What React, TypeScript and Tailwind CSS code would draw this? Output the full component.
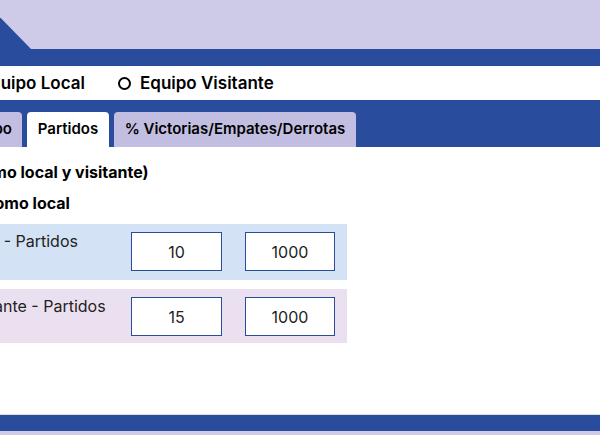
const rows = [
  { label: "Promedio como local - Partidos", a: "10", b: "1000", bg: "bg-[#d3e3f5]", h: "h-[56px]" },
  { label: "Promedio como visitante - Partidos", a: "15", b: "1000", bg: "bg-[#ebe0f0]", h: "h-[54px]" },
];

function Radio({ label }: { label: string }) {
  return (
    <label className="flex items-center gap-[9px] text-[17px] font-semibold text-black">
      <span className="w-[13px] h-[13px] rounded-full border-2 border-black bg-white" />
      {label}
    </label>
  );
}

export default function App() {
  return (
    <div className="w-[600px] h-[435px] overflow-hidden bg-white font-['Inter',sans-serif]">
      <div className="w-[800px] -ml-[200px]">
        {/* header */}
        <div className="h-[49px] bg-[#cdcbe7] flex">
          <div className="w-[231px] h-full bg-[#2a4c9c] [clip-path:polygon(0_0,183px_0,231px_49px,0_49px)]" />
        </div>
        <div className="h-[17px] bg-[#2a4c9c]" />

        {/* radios */}
        <div className="h-[34px] pt-[1px] flex items-center">
          <div className="w-[285px] flex justify-end">
            <Radio label="Equipo Local" />
          </div>
          <div className="ml-[33px]">
            <Radio label="Equipo Visitante" />
          </div>
        </div>

        {/* tabs */}
        <div className="h-[47px] bg-[#2a4c9c] flex items-end">
          <div className="w-[222px] flex justify-end">
            <div className="h-[35px] px-[10px] flex items-center rounded-t-[4px] bg-[#c1bee1] text-[15px] font-semibold text-black">
              Equipo
            </div>
          </div>
          <div className="ml-[5px] w-[82px] h-[35px] flex items-center justify-center rounded-t-[4px] bg-white text-[15px] font-semibold text-black">
            Partidos
          </div>
          <div className="ml-[5px] w-[242px] h-[35px] flex items-center justify-center rounded-t-[4px] bg-[#c1bee1] text-[15px] font-semibold text-black">
            % Victorias/Empates/Derrotas
          </div>
        </div>

        {/* content */}
        <div className="h-[268px] border-b border-[#dddddd] pt-[13px]">
          <div className="pl-[98px] text-[16px] leading-[24px] font-bold text-black whitespace-nowrap">
            Partidos (como local y visitante)
          </div>
          <div className="pl-[116px] mt-[7px] mb-[9px] text-[16px] leading-[24px] font-bold text-black whitespace-nowrap">
            Partidos como local
          </div>
          <div className="w-[547px] flex flex-col gap-[9px]">
            {rows.map((r) => (
              <div key={r.label} className={`${r.bg} ${r.h} pt-[8px] pr-[12px] flex items-start`}>
                <div className="flex-1 pl-[40px] text-[16px] leading-[18px] text-[#222222] whitespace-nowrap">
                  {r.label}
                </div>
                <div className="w-[91px] h-[39px] border border-[#2a4c9c] bg-white flex items-center justify-center text-[16px] text-[#222222]">
                  {r.a}
                </div>
                <div className="ml-[23px] w-[90px] h-[39px] border border-[#2a4c9c] bg-white flex items-center justify-center text-[16px] text-[#222222]">
                  {r.b}
                </div>
              </div>
            ))}
          </div>
        </div>

        {/* footer */}
        <div className="h-[16px] bg-[#2a4c9c]" />
        <div className="h-[20px] bg-[#cdcbe7]" />
      </div>
    </div>
  );
}
